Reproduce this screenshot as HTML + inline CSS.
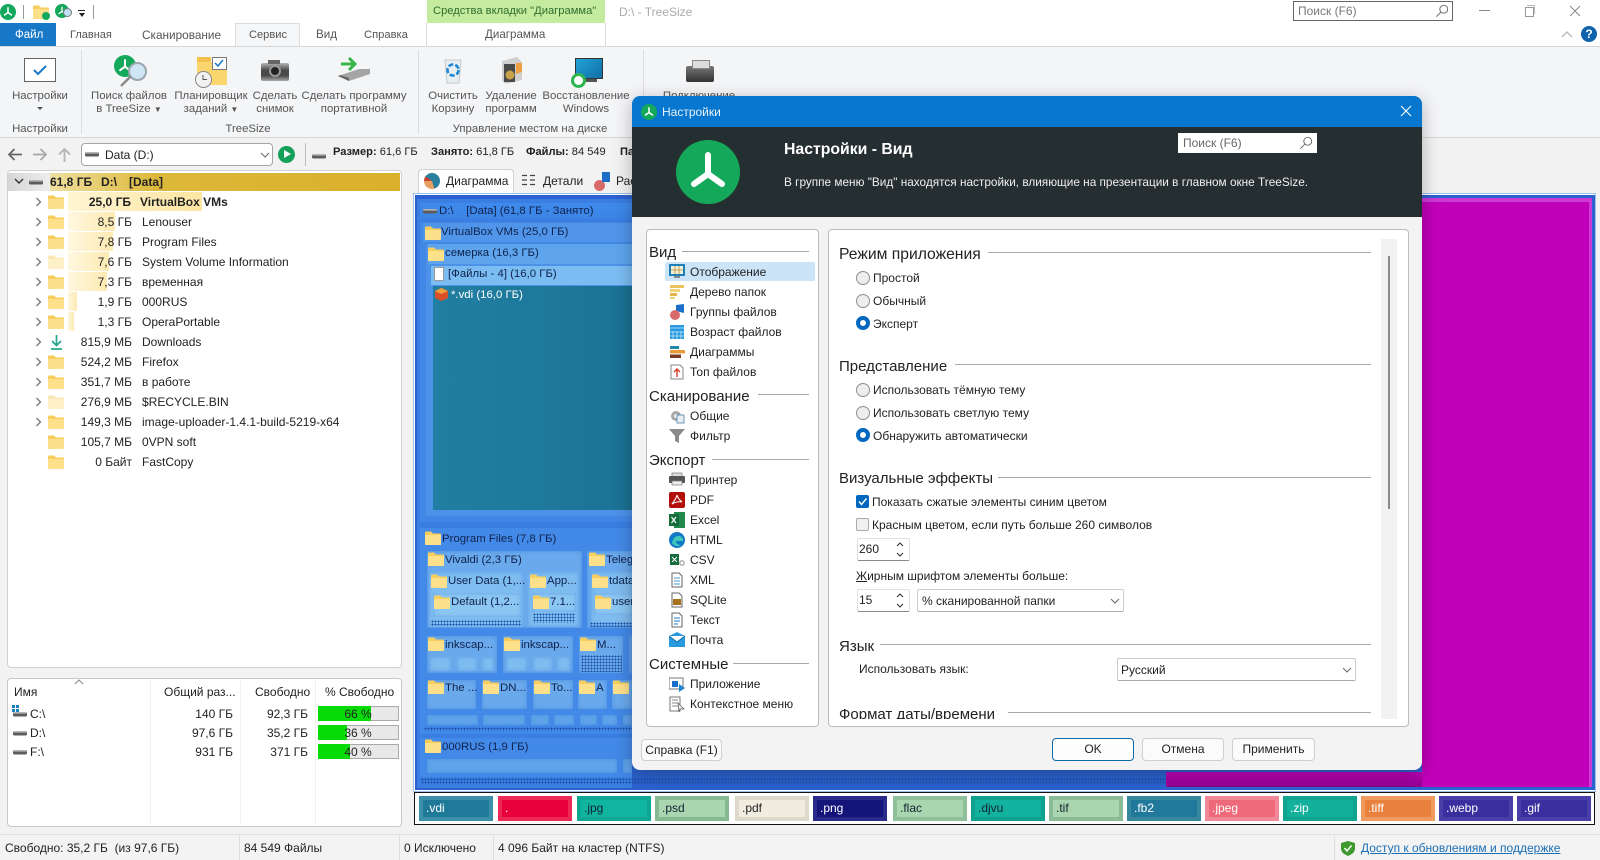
<!DOCTYPE html>
<html lang="ru"><head><meta charset="utf-8"><title>TreeSize</title>
<style>
html,body{margin:0;padding:0;background:#f3f3f3}
#p{position:relative;width:1600px;height:860px;overflow:hidden;background:#f2f2f2;font:12px/16px "Liberation Sans","Noto Sans CJK SC",sans-serif;color:#222}
#p div,#p span,#p svg{position:absolute}
#p b span,#p span span,#p .st{position:static}
.t{white-space:nowrap}
.c{white-space:nowrap;text-align:center;transform:translateX(-50%)}
.g{color:#555;font-size:11.4px}
.bd{background:#fff;border:1px solid #c4c4c4;box-sizing:border-box;border-radius:4px}
.sz{left:0;width:132px;text-align:right;white-space:nowrap}
.nm{left:142px;white-space:nowrap}
.bar{left:68px;height:19px;background:linear-gradient(90deg,#fff8e0,#fdeab2)}
.arr{left:35px;width:7px;height:10px}
.fo{left:48px;width:16px;height:14px}
.h{font-size:15px;line-height:18px;white-space:nowrap;color:#222}
.ln{height:1px;background:#a8a8a8}
.btn{background:#fbfbfb;border:1px solid #cfcfcf;box-sizing:border-box;border-radius:4px;text-align:center;line-height:21px}
.rd{left:856px;width:14px;height:14px;box-sizing:border-box;border:1px solid #8e8e8e;border-radius:50%;background:#eee}
.ro{left:856px;width:14px;height:14px;box-sizing:border-box;border:4px solid #0067c0;border-radius:50%;background:#fff}
.cb{background:#fff;border:1px solid #e0e0e0;border-bottom:1px solid #8a8a8a;box-sizing:border-box;border-radius:2px}
.ti{left:669px;width:16px;height:16px}
.ni{left:690px;white-space:nowrap}
.a{background:#6aa9ec;box-shadow:inset 0 0 4px #4f8fe0}
.l{background:#7fbcf0;box-shadow:inset 0 0 4px #5fa0e8}
.s{background:#5fa3ea;box-shadow:inset 0 0 3px #4b8ee0}
.d{background-image:radial-gradient(#1b4fa6 .9px,transparent 1px);background-size:3px 3px}
.ch{top:796px;width:74px;height:25px;box-sizing:border-box;border:4px solid;line-height:17px;padding-left:3px;white-space:nowrap}
.tt{color:#10234d;white-space:nowrap;font-size:11.4px}
</style></head><body>
<div id="p">
<svg width="0" height="0" style="left:0;top:0">
<defs>
<symbol id="logo" viewBox="0 0 64 64"><circle cx="32" cy="32" r="32" fill="#14a85a"/><path d="M32 15V34M18 44L32 34L46 44" fill="none" stroke="#fff" stroke-width="6" stroke-linecap="round" stroke-linejoin="round"/></symbol>
<symbol id="fold" viewBox="0 0 16 14"><path d="M0 1.5Q0 .5 1 .5H6L8 2.5H15Q16 2.5 16 3.5V13Q16 14 15 14H1Q0 14 0 13Z" fill="#f7cd5e"/><path d="M0 4H16V13Q16 14 15 14H1Q0 14 0 13Z" fill="#fde08a"/></symbol>
<symbol id="drv" viewBox="0 0 14 6"><rect x="0" y="1" width="14" height="4.5" rx="1.5" fill="#5c5c5c"/><rect x="0" y="1" width="14" height="1.6" rx=".8" fill="#b5b5b5"/></symbol>
<symbol id="chv" viewBox="0 0 7 10"><path d="M1.5 1L5.5 5L1.5 9" fill="none" stroke="#777" stroke-width="1.3"/></symbol>
<symbol id="dn" viewBox="0 0 10 6"><path d="M1 1L5 5L9 1" fill="none" stroke="#666" stroke-width="1"/></symbol>
<symbol id="lens" viewBox="0 0 16 16"><circle cx="10" cy="6" r="4.5" fill="none" stroke="#666" stroke-width="1.1"/><path d="M6.5 9.5L1.5 14.5" stroke="#666" stroke-width="1.1"/></symbol>
</defs></svg>

<!-- Title bar -->
<div style="left:0;top:0;width:1600px;height:46px;background:#fff"></div>
<svg style="left:0;top:4px" width="16" height="16"><use href="#logo"/></svg>
<div style="left:23px;top:5px;width:1px;height:14px;background:#999"></div>
<svg style="left:33px;top:5px" width="16" height="14"><use href="#fold"/></svg>
<div style="left:42px;top:12px;width:8px;height:8px;border-radius:50%;background:#14a85a"></div>
<svg style="left:55px;top:4px" width="14" height="14"><use href="#logo"/></svg>
<div style="left:63px;top:8px;width:7px;height:7px;border-radius:50%;background:#bfe0f5;border:1px solid #777"></div>
<div style="left:78px;top:10px;width:7px;height:1px;background:#222"></div>
<div style="left:79px;top:13px;width:0;height:0;border:3px solid transparent;border-top:4px solid #222"></div>
<div style="left:93px;top:5px;width:1px;height:14px;background:#999"></div>
<div style="left:427px;top:0;width:178px;height:23px;background:#c4eb9e"></div>
<div class="t" style="left:433px;top:3px;color:#2f6e2f;font-size:11.2px">Средства вкладки "Диаграмма"</div>
<div class="t" style="left:619px;top:4px;color:#aaa">D:\ - TreeSize</div>
<div style="left:1293px;top:1px;width:160px;height:20px;box-sizing:border-box;border:1px solid #666;background:#fff"></div>
<div class="t" style="left:1298px;top:3px;color:#777">Поиск (F6)</div>
<svg style="left:1435px;top:4px" width="14" height="14"><use href="#lens"/></svg>
<div style="left:1479px;top:10px;width:11px;height:1px;background:#888"></div>
<div style="left:1525px;top:7px;width:7px;height:8px;border:1px solid #999"></div>
<div style="left:1527px;top:5px;width:7px;height:8px;border:1px solid #bbb;border-left:0;border-bottom:0"></div>
<svg style="left:1569px;top:5px" width="12" height="12"><path d="M1 1L11 11M11 1L1 11" stroke="#888" stroke-width="1"/></svg>
<svg style="left:1561px;top:31px" width="12" height="7"><path d="M1 6L6 1L11 6" fill="none" stroke="#bbb" stroke-width="1.4"/></svg>
<div style="left:1581px;top:26px;width:16px;height:16px;border-radius:50%;background:#0f62ac;color:#fff;font-weight:bold;text-align:center;line-height:16px">?</div>

<!-- Tabs -->
<div style="left:0;top:23px;width:56px;height:23px;background:#1878c8"></div>
<div class="t" style="left:15px;top:27px;color:#fff;font-size:11.5px">Файл</div>
<div class="t g" style="left:70px;top:27px;font-size:11px">Главная</div>
<div class="t g" style="left:142px;top:27px;font-size:11.8px">Сканирование</div>
<div style="left:235px;top:23px;width:65px;height:24px;box-sizing:border-box;background:#f5f6f7;border:1px solid #dcdcdc;border-bottom:0"></div>
<div class="t g" style="left:249px;top:27px;font-size:11.1px">Сервис</div>
<div class="t g" style="left:316px;top:27px;font-size:11.6px">Вид</div>
<div class="t g" style="left:364px;top:27px;font-size:11.2px">Справка</div>
<div style="left:426px;top:23px;width:1px;height:23px;background:#ddd"></div>
<div style="left:605px;top:23px;width:1px;height:23px;background:#ddd"></div>
<div class="t g" style="left:485px;top:27px;font-size:11.6px">Диаграмма</div>

<!-- Ribbon -->
<div style="left:0;top:46px;width:1600px;height:92px;background:#f4f5f7;border-top:1px solid #d6d6d6;border-bottom:1px solid #d6d6d6;box-sizing:border-box"></div>
<div style="left:81px;top:50px;width:1px;height:84px;background:#ddd"></div>
<div style="left:418px;top:50px;width:1px;height:84px;background:#ddd"></div>
<div style="left:643px;top:50px;width:1px;height:84px;background:#ddd"></div>

<div style="left:24px;top:58px;width:32px;height:24px;box-sizing:border-box;background:#fff;border:1px solid #666"></div>
<svg style="left:32px;top:63px" width="16" height="14"><path d="M2 7L6 11L14 3" fill="none" stroke="#1877c9" stroke-width="2"/></svg>
<div class="c g" style="left:40px;top:88px">Настройки</div>
<div style="left:37px;top:107px;border:3px solid transparent;border-top:3px solid #555"></div>
<div class="c g" style="left:40px;top:121px">Настройки</div>

<svg style="left:114px;top:55px" width="22" height="22"><use href="#logo"/></svg>
<div style="left:128px;top:62px;width:19px;height:19px;box-sizing:border-box;border-radius:50%;background:#cfe6f5;border:2px solid #9aa5ad"></div>
<svg style="left:119px;top:75px" width="13" height="12"><path d="M12 1L2 11" stroke="#8a8a8a" stroke-width="2.4"/></svg>
<div class="c g" style="left:129px;top:88px">Поиск файлов</div>
<div class="c g" style="left:129px;top:101px">в TreeSize <span class="st" style="font-size:8px">▼</span></div>

<div style="left:197px;top:62px;width:30px;height:23px;background:#fbd56d"></div>
<div style="left:197px;top:57px;width:14px;height:5px;background:#f2c14e"></div>
<div style="left:212px;top:57px;width:15px;height:13px;box-sizing:border-box;background:#fff;border:1px solid #777"></div>
<svg style="left:214px;top:59px" width="10" height="9"><path d="M1 4L4 7L9 1" fill="none" stroke="#1877c9" stroke-width="1.5"/></svg>
<div style="left:195px;top:71px;width:17px;height:17px;box-sizing:border-box;border-radius:50%;background:#f2f2f2;border:1px solid #888"></div>
<svg style="left:198px;top:74px" width="10" height="10"><path d="M5 1V5.5H9" fill="none" stroke="#555"/></svg>
<div class="c g" style="left:211px;top:88px">Планировщик</div>
<div class="c g" style="left:211px;top:101px">заданий <span class="st" style="font-size:8px">▼</span></div>

<div style="left:261px;top:63px;width:28px;height:18px;background:linear-gradient(#b5b5b5,#4a4a4a 40%,#4a4a4a 70%,#aaa);border-radius:2px"></div>
<div style="left:268px;top:60px;width:12px;height:4px;background:#666"></div>
<div style="left:269px;top:65px;width:12px;height:12px;box-sizing:border-box;border-radius:50%;background:#222;border:2px solid #999"></div>
<div class="c g" style="left:275px;top:88px">Сделать</div>
<div class="c g" style="left:275px;top:101px">снимок</div>

<svg style="left:337px;top:56px" width="34" height="26"><path d="M1 20L22 13L33 13L33 18L12 25Z" fill="#a5a5a5"/><path d="M1 20L12 25L12 22L3 19Z" fill="#666"/><path d="M4 8H16M12 2L18 8L12 14" fill="none" stroke="#38b54a" stroke-width="3"/></svg>
<div class="c g" style="left:354px;top:88px">Сделать программу</div>
<div class="c g" style="left:354px;top:101px">портативной</div>
<div class="c g" style="left:248px;top:121px">TreeSize</div>

<svg style="left:443px;top:55px" width="20" height="29"><path d="M2 5H18L16 28H4Z" fill="#e8edf0" stroke="#c3c9cd"/><circle cx="10" cy="15" r="5.5" fill="none" stroke="#1c88d8" stroke-width="2.6" stroke-dasharray="5 2"/></svg>
<div class="c g" style="left:453px;top:88px">Очистить</div>
<div class="c g" style="left:453px;top:101px">Корзину</div>

<svg style="left:501px;top:56px" width="22" height="29"><path d="M1 5L16 1L21 6V24L5 28L1 25Z" fill="#d0d0d0"/><path d="M3 8H14V26H3Z" fill="#4a4a4a"/><circle cx="9" cy="19" r="4.5" fill="#c9a24a"/><path d="M15 7H21V16L15 18Z" fill="#f0a040"/></svg>
<div class="c g" style="left:511px;top:88px">Удаление</div>
<div class="c g" style="left:511px;top:101px">программ</div>

<div style="left:575px;top:58px;width:28px;height:21px;background:linear-gradient(135deg,#23a3d6,#0f6fa6);border:1px solid #333;box-sizing:border-box"></div>
<div style="left:583px;top:79px;width:14px;height:3px;background:#555"></div>
<div style="left:571px;top:73px;width:15px;height:15px;box-sizing:border-box;border-radius:50%;background:#fff;border:3px solid #2fb54f"></div>
<div class="c g" style="left:586px;top:88px">Восстановление</div>
<div class="c g" style="left:586px;top:101px">Windows</div>
<div class="c g" style="left:530px;top:121px">Управление местом на диске</div>

<div style="left:686px;top:66px;width:28px;height:16px;background:linear-gradient(#777,#333);border-radius:2px"></div>
<div style="left:692px;top:60px;width:16px;height:7px;background:#ddd;border:1px solid #888"></div>
<div class="c g" style="left:699px;top:88px">Подключение</div>

<!-- Toolbar -->
<svg style="left:8px;top:148px" width="15" height="13"><path d="M6.5 1L1 6.5L6.5 12M1 6.5H14" fill="none" stroke="#666" stroke-width="1.8"/></svg>
<svg style="left:32px;top:148px" width="15" height="13"><path d="M8.5 1L14 6.5L8.5 12M14 6.5H1" fill="none" stroke="#a8a8a8" stroke-width="1.8"/></svg>
<svg style="left:58px;top:148px" width="13" height="14"><path d="M1 6.5L6.5 1L12 6.5M6.5 1V14" fill="none" stroke="#b5b5b5" stroke-width="1.8"/></svg>
<div class="bd" style="left:81px;top:143px;width:192px;height:23px;border-color:#a5a5a5"></div>
<svg style="left:85px;top:151px" width="14" height="6"><use href="#drv"/></svg>
<div class="t" style="left:105px;top:147px">Data (D:)</div>
<svg style="left:260px;top:152px" width="10" height="6"><use href="#dn"/></svg>
<div style="left:278px;top:146px;width:17px;height:17px;border-radius:50%;background:#15a05a"></div>
<div style="left:284px;top:150px;border:4.5px solid transparent;border-left:7px solid #fff;border-right:0"></div>
<div style="left:305px;top:143px;width:1px;height:23px;background:#bbb"></div>
<svg style="left:312px;top:153px" width="14" height="6"><use href="#drv"/></svg>
<div class="t" style="left:333px;top:144px;font-size:11.1px"><b>Размер:</b> 61,6 ГБ</div>
<div class="t" style="left:431px;top:144px;font-size:11.1px"><b>Занято:</b> 61,8 ГБ</div>
<div class="t" style="left:526px;top:144px;font-size:11.1px"><b>Файлы:</b> 84 549</div>
<div class="t" style="left:620px;top:144px;font-size:11.1px"><b>Па</b></div>

<!-- Tree panel -->
<div class="bd" style="left:7px;top:170px;width:395px;height:498px;border-color:#d0d0d0"></div>
<div style="left:8px;top:173px;width:42px;height:18px;background:linear-gradient(90deg,#d6d6d6,#ededed)"></div>
<div style="left:50px;top:173px;width:350px;height:18px;background:linear-gradient(90deg,#efe0a0,#dcb83a 30%,#d9b02a)"></div>
<svg style="left:14px;top:178px" width="10" height="6"><path d="M1 1L5 5L9 1" fill="none" stroke="#333" stroke-width="1.4"/></svg>
<svg style="left:29px;top:179px" width="14" height="6"><use href="#drv"/></svg>
<div class="t" style="left:50px;top:174px;font-weight:bold">61,8 ГБ</div>
<div class="t" style="left:101px;top:174px;font-weight:bold">D:\</div>
<div class="t" style="left:129px;top:174px;font-weight:bold">[Data]</div>

<div class="bar" style="top:192px;width:134px;background:linear-gradient(90deg,#fff5d2,#fde5a2)"></div>
<div class="bar" style="top:212px;width:47px"></div>
<div class="bar" style="top:232px;width:45px"></div>
<div class="bar" style="top:252px;width:41px"></div>
<div class="bar" style="top:272px;width:39px"></div>
<div class="bar" style="top:292px;width:9px"></div>
<div class="bar" style="top:312px;width:6px"></div>

<svg class="arr" style="top:197px"><use href="#chv"/></svg><svg class="fo" style="top:195px"><use href="#fold"/></svg>
<div class="sz" style="top:194px;font-weight:bold;width:131px">25,0 ГБ</div><div class="nm" style="top:194px;left:140px;font-weight:bold">VirtualBox VMs</div>
<svg class="arr" style="top:217px"><use href="#chv"/></svg><svg class="fo" style="top:215px"><use href="#fold"/></svg>
<div class="sz" style="top:214px">8,5 ГБ</div><div class="nm" style="top:214px">Lenouser</div>
<svg class="arr" style="top:237px"><use href="#chv"/></svg><svg class="fo" style="top:235px"><use href="#fold"/></svg>
<div class="sz" style="top:234px">7,8 ГБ</div><div class="nm" style="top:234px">Program Files</div>
<svg class="arr" style="top:257px"><use href="#chv"/></svg><svg class="fo" style="top:255px;opacity:.45"><use href="#fold"/></svg>
<div class="sz" style="top:254px">7,6 ГБ</div><div class="nm" style="top:254px">System Volume Information</div>
<svg class="arr" style="top:277px"><use href="#chv"/></svg><svg class="fo" style="top:275px"><use href="#fold"/></svg>
<div class="sz" style="top:274px">7,3 ГБ</div><div class="nm" style="top:274px">временная</div>
<svg class="arr" style="top:297px"><use href="#chv"/></svg><svg class="fo" style="top:295px"><use href="#fold"/></svg>
<div class="sz" style="top:294px">1,9 ГБ</div><div class="nm" style="top:294px">000RUS</div>
<svg class="arr" style="top:317px"><use href="#chv"/></svg><svg class="fo" style="top:315px"><use href="#fold"/></svg>
<div class="sz" style="top:314px">1,3 ГБ</div><div class="nm" style="top:314px">OperaPortable</div>
<svg class="arr" style="top:337px"><use href="#chv"/></svg><svg style="left:50px;top:334px" width="13" height="16"><path d="M6.5 1V11M2 7L6.5 11.5L11 7M1 15H12" fill="none" stroke="#22a88e" stroke-width="1.7"/></svg>
<div class="sz" style="top:334px">815,9 МБ</div><div class="nm" style="top:334px">Downloads</div>
<svg class="arr" style="top:357px"><use href="#chv"/></svg><svg class="fo" style="top:355px"><use href="#fold"/></svg>
<div class="sz" style="top:354px">524,2 МБ</div><div class="nm" style="top:354px">Firefox</div>
<svg class="arr" style="top:377px"><use href="#chv"/></svg><svg class="fo" style="top:375px"><use href="#fold"/></svg>
<div class="sz" style="top:374px">351,7 МБ</div><div class="nm" style="top:374px">в работе</div>
<svg class="arr" style="top:397px"><use href="#chv"/></svg><svg class="fo" style="top:395px;opacity:.45"><use href="#fold"/></svg>
<div class="sz" style="top:394px">276,9 МБ</div><div class="nm" style="top:394px">$RECYCLE.BIN</div>
<svg class="arr" style="top:417px"><use href="#chv"/></svg><svg class="fo" style="top:415px"><use href="#fold"/></svg>
<div class="sz" style="top:414px">149,3 МБ</div><div class="nm" style="top:414px">image-uploader-1.4.1-build-5219-x64</div>
<svg class="fo" style="top:435px"><use href="#fold"/></svg>
<div class="sz" style="top:434px">105,7 МБ</div><div class="nm" style="top:434px">0VPN soft</div>
<svg class="fo" style="top:455px"><use href="#fold"/></svg>
<div class="sz" style="top:454px">0 Байт</div><div class="nm" style="top:454px">FastCopy</div>

<!-- Drives panel -->
<div class="bd" style="left:7px;top:678px;width:395px;height:149px;border-color:#c8c8c8"></div>
<div style="left:150px;top:680px;width:1px;height:145px;background:#f0f0f0"></div>
<div style="left:240px;top:680px;width:1px;height:145px;background:#f0f0f0"></div>
<div style="left:315px;top:680px;width:1px;height:145px;background:#f0f0f0"></div>
<svg style="left:74px;top:679px" width="10" height="6"><path d="M1 5L5 1L9 5" fill="none" stroke="#888"/></svg>
<div class="t" style="left:14px;top:684px">Имя</div>
<div class="t" style="left:164px;top:684px">Общий раз...</div>
<div class="t" style="left:255px;top:684px">Свободно</div>
<div class="t" style="left:325px;top:684px">% Свободно</div>

<div style="left:12px;top:705px;width:3px;height:3px;background:#1c7fc4;box-shadow:4px 0 #1c7fc4,0 4px #1c7fc4,4px 4px #1c7fc4"></div>
<svg style="left:13px;top:711px" width="14" height="6"><use href="#drv"/></svg>
<svg style="left:13px;top:730px" width="14" height="6"><use href="#drv"/></svg>
<svg style="left:13px;top:749px" width="14" height="6"><use href="#drv"/></svg>
<div class="t" style="left:30px;top:706px">C:\</div><div class="t" style="left:30px;top:725px">D:\</div><div class="t" style="left:30px;top:744px">F:\</div>
<div class="sz" style="top:706px;width:233px">140 ГБ</div><div class="sz" style="top:706px;width:308px">92,3 ГБ</div>
<div class="sz" style="top:725px;width:233px">97,6 ГБ</div><div class="sz" style="top:725px;width:308px">35,2 ГБ</div>
<div class="sz" style="top:744px;width:233px">931 ГБ</div><div class="sz" style="top:744px;width:308px">371 ГБ</div>
<div style="left:318px;top:706px;width:81px;height:15px;background:#e8e8e8;border:1px solid #aaa;box-sizing:border-box"></div><div style="left:318px;top:706px;width:53px;height:15px;background:#08dc08"></div>
<div style="left:318px;top:725px;width:81px;height:15px;background:#e8e8e8;border:1px solid #aaa;box-sizing:border-box"></div><div style="left:318px;top:725px;width:29px;height:15px;background:#08dc08"></div>
<div style="left:318px;top:744px;width:81px;height:15px;background:#e8e8e8;border:1px solid #aaa;box-sizing:border-box"></div><div style="left:318px;top:744px;width:32px;height:15px;background:#08dc08"></div>
<div class="c" style="left:358px;top:706px">66 %</div><div class="c" style="left:358px;top:725px">36 %</div><div class="c" style="left:358px;top:744px">40 %</div>

<!-- Status bar -->
<div style="left:0;top:834px;width:1600px;height:26px;background:#f3f3f3;border-top:1px solid #e2e2e2;box-sizing:border-box"></div>
<div style="left:239px;top:836px;width:1px;height:24px;background:#ddd"></div>
<div style="left:399px;top:836px;width:1px;height:24px;background:#ddd"></div>
<div style="left:493px;top:836px;width:1px;height:24px;background:#ddd"></div>
<div style="left:1334px;top:836px;width:1px;height:24px;background:#ddd"></div>
<div class="t" style="left:5px;top:840px">Свободно: 35,2 ГБ&nbsp; (из 97,6 ГБ)</div>
<div class="t" style="left:244px;top:840px">84 549 Файлы</div>
<div class="t" style="left:404px;top:840px">0 Исключено</div>
<div class="t" style="left:498px;top:840px">4 096 Байт на кластер (NTFS)</div>
<svg style="left:1341px;top:841px" width="14" height="15"><path d="M7 0L14 2V8Q14 12 7 15Q0 12 0 8V2Z" fill="#3f9a2e"/><path d="M3.5 7L6 10L10.5 4.5" fill="none" stroke="#fff" stroke-width="1.5"/></svg>
<div class="t" style="left:1361px;top:840px;color:#1b6fb5;text-decoration:underline">Доступ к обновлениям и поддержке</div>

<!-- Chart tabs -->
<div style="left:418px;top:169px;width:96px;height:26px;box-sizing:border-box;background:#fff;border:1px solid #d0d0d0;border-bottom:0;border-radius:4px 4px 0 0"></div>
<div style="left:424px;top:173px;width:16px;height:16px;border-radius:50%;background:conic-gradient(#2a7f9f 0 45%,#e8a060 45% 75%,#c93f2f 75% 85%,#2a7f9f 85%)"></div>
<div class="t" style="left:446px;top:173px">Диаграмма</div>
<svg style="left:522px;top:174px" width="14" height="13"><path d="M0 1.5H5M0 6H5M0 10.5H5M8 1.5H13M8 6H13M8 10.5H13" stroke="#444" stroke-width="1.2"/></svg>
<div class="t" style="left:543px;top:173px">Детали</div>
<div style="left:594px;top:180px;width:11px;height:11px;border-radius:50%;background:#d86a6a"></div>
<div style="left:602px;top:172px;width:8px;height:10px;background:#1c6fc8"></div>
<div class="t" style="left:616px;top:173px">Рас</div>

<!-- Treemap -->
<div style="left:413px;top:193px;width:1183px;height:599px;background:#fff;box-shadow:0 0 0 1px #9fc2ea inset"></div>
<div style="left:415px;top:195px;width:1180px;height:595px;background:#2c62cf"></div>
<div style="left:1166px;top:772px;width:424px;height:15px;background:linear-gradient(#c000b8,#8f0090)"></div>
<div style="left:1422px;top:198px;width:170px;height:589px;box-sizing:border-box;background:#c000b8;border:1px solid #cc3ad6;border-width:4px 3px 0 0"></div>
<div style="left:417px;top:199px;width:215px;height:589px;background:#3a7ee2"></div>
<div style="left:420px;top:203px;width:212px;height:16px;background:linear-gradient(#3f8aec,#3b84e6)"></div>
<svg style="left:423px;top:208px" width="14" height="6"><use href="#drv"/></svg>
<div class="tt" style="left:439px;top:203px">D:\ &nbsp;&nbsp; [Data] (61,8 ГБ - Занято)</div>
<div style="left:420px;top:222px;width:212px;height:300px;background:#4287e6"></div>
<div style="left:423px;top:223px;width:209px;height:19px;background:#5095ea"></div>
<svg style="left:425px;top:226px" width="16" height="14"><use href="#fold"/></svg>
<div class="tt" style="left:441px;top:224px">VirtualBox VMs (25,0 ГБ)</div>
<div style="left:426px;top:244px;width:206px;height:272px;background:#4d91e8"></div>
<div style="left:428px;top:244px;width:204px;height:20px;background:#5ea5ee"></div>
<svg style="left:428px;top:247px" width="16" height="14"><use href="#fold"/></svg>
<div class="tt" style="left:445px;top:245px">семерка (16,3 ГБ)</div>
<div style="left:430px;top:265px;width:202px;height:245px;background:#4a93e6"></div>
<div style="left:431px;top:266px;width:201px;height:19px;background:#7bbdf3"></div>
<div style="left:434px;top:267px;width:10px;height:14px;background:#fff;border:1px solid #999;box-sizing:border-box"></div>
<div class="tt" style="left:448px;top:266px">[Файлы - 4] (16,0 ГБ)</div>
<div style="left:433px;top:286px;width:199px;height:224px;background:linear-gradient(90deg,#217ea2,#1e7a9c 50%,#1b7193)"></div>
<svg style="left:434px;top:287px" width="15" height="15"><path d="M7.5 1L14 4V11L7.5 14L1 11V4Z" fill="#d8512a"/><path d="M7.5 7L14 4L7.5 1L1 4Z" fill="#f0a03a"/></svg>
<div class="t" style="left:451px;top:287px;color:#fff;font-size:11.4px">*.vdi (16,0 ГБ)</div>

<div style="left:420px;top:528px;width:212px;height:206px;background:#4389e8"></div>
<svg style="left:425px;top:531px" width="16" height="14"><use href="#fold"/></svg>
<div class="tt" style="left:442px;top:531px">Program Files (7,8 ГБ)</div>
<div class="a" style="left:427px;top:551px;width:155px;height:77px"></div>
<svg style="left:428px;top:552px" width="16" height="14"><use href="#fold"/></svg><div class="tt" style="left:445px;top:552px">Vivaldi (2,3 ГБ)</div>
<div class="l" style="left:429px;top:572px;width:94px;height:55px"></div>
<svg style="left:431px;top:574px" width="16" height="14"><use href="#fold"/></svg><div class="tt" style="left:448px;top:573px">User Data (1,...</div>
<div class="l" style="left:433px;top:593px;width:88px;height:24px;background:#8cc6f2"></div>
<svg style="left:434px;top:595px" width="16" height="14"><use href="#fold"/></svg><div class="tt" style="left:451px;top:594px">Default (1,2...</div>
<div class="d" style="left:431px;top:620px;width:90px;height:6px"></div>
<div class="l" style="left:528px;top:572px;width:51px;height:55px"></div>
<svg style="left:530px;top:574px" width="16" height="14"><use href="#fold"/></svg><div class="tt" style="left:547px;top:573px">App...</div>
<div class="l" style="left:532px;top:593px;width:44px;height:19px;background:#8cc6f2"></div>
<svg style="left:533px;top:595px" width="16" height="14"><use href="#fold"/></svg><div class="tt" style="left:550px;top:594px">7.1...</div>
<div class="d" style="left:533px;top:613px;width:42px;height:10px"></div>
<div class="a" style="left:587px;top:551px;width:45px;height:77px"></div>
<svg style="left:589px;top:552px" width="16" height="14"><use href="#fold"/></svg><div class="tt" style="left:606px;top:552px;width:26px;overflow:hidden">Teleg</div>
<div class="l" style="left:591px;top:572px;width:41px;height:53px"></div>
<svg style="left:592px;top:574px" width="16" height="14"><use href="#fold"/></svg><div class="tt" style="left:609px;top:573px;width:23px;overflow:hidden">tdata</div>
<div class="l" style="left:594px;top:593px;width:38px;height:22px;background:#8cc6f2"></div>
<svg style="left:595px;top:595px" width="16" height="14"><use href="#fold"/></svg><div class="tt" style="left:612px;top:594px;width:20px;overflow:hidden">user</div>
<div class="d" style="left:590px;top:622px;width:42px;height:5px"></div>

<div class="a" style="left:427px;top:636px;width:70px;height:37px"></div>
<svg style="left:428px;top:637px" width="16" height="14"><use href="#fold"/></svg><div class="tt" style="left:445px;top:637px">inkscap...</div>
<div class="l" style="left:430px;top:657px;width:21px;height:14px"></div><div class="l" style="left:457px;top:657px;width:20px;height:14px"></div><div class="l" style="left:482px;top:657px;width:12px;height:14px"></div>
<div class="a" style="left:503px;top:636px;width:70px;height:37px"></div>
<svg style="left:504px;top:637px" width="16" height="14"><use href="#fold"/></svg><div class="tt" style="left:521px;top:637px">inkscap...</div>
<div class="l" style="left:506px;top:657px;width:21px;height:14px"></div><div class="l" style="left:533px;top:657px;width:19px;height:14px"></div><div class="l" style="left:557px;top:657px;width:13px;height:14px"></div>
<div class="a" style="left:579px;top:636px;width:44px;height:37px"></div>
<svg style="left:580px;top:637px" width="16" height="14"><use href="#fold"/></svg><div class="tt" style="left:597px;top:637px">M...</div>
<div class="d" style="left:581px;top:655px;width:41px;height:17px"></div>
<div class="a" style="left:629px;top:636px;width:3px;height:37px"></div>

<div class="a" style="left:427px;top:680px;width:49px;height:29px"></div><svg style="left:428px;top:680px" width="16" height="14"><use href="#fold"/></svg><div class="tt" style="left:445px;top:680px">The ...</div>
<div class="a" style="left:482px;top:680px;width:45px;height:29px"></div><svg style="left:483px;top:680px" width="16" height="14"><use href="#fold"/></svg><div class="tt" style="left:500px;top:680px">DN...</div>
<div class="a" style="left:533px;top:680px;width:40px;height:29px"></div><svg style="left:534px;top:680px" width="16" height="14"><use href="#fold"/></svg><div class="tt" style="left:551px;top:680px">To...</div>
<div class="a" style="left:578px;top:680px;width:29px;height:29px"></div><svg style="left:579px;top:680px" width="16" height="14"><use href="#fold"/></svg><div class="tt" style="left:596px;top:680px">A</div>
<div class="a" style="left:612px;top:680px;width:20px;height:29px"></div><svg style="left:613px;top:680px" width="16" height="14"><use href="#fold"/></svg>
<div class="s" style="left:427px;top:715px;width:51px;height:10px"></div><div class="s" style="left:483px;top:715px;width:42px;height:10px"></div><div class="s" style="left:531px;top:715px;width:18px;height:10px"></div><div class="s" style="left:554px;top:715px;width:20px;height:10px"></div><div class="s" style="left:580px;top:715px;width:17px;height:10px"></div><div class="s" style="left:602px;top:715px;width:15px;height:10px"></div><div class="s" style="left:623px;top:715px;width:9px;height:10px"></div>
<div class="d" style="left:424px;top:727px;width:208px;height:4px"></div>

<div style="left:420px;top:738px;width:212px;height:39px;background:#4389e8"></div>
<svg style="left:425px;top:739px" width="16" height="14"><use href="#fold"/></svg>
<div class="tt" style="left:442px;top:739px">000RUS (1,9 ГБ)</div>
<div class="s" style="left:427px;top:759px;width:190px;height:14px"></div>
<div class="s" style="left:623px;top:759px;width:9px;height:14px"></div>
<div class="d" style="left:421px;top:778px;width:745px;height:6px"></div>

<!-- Legend -->
<div style="left:414px;top:792px;width:1181px;height:33px;box-sizing:border-box;background:#fff;border:1px solid #111"></div>
<div class="ch" style="left:419px;background:#1f7a9a;border-color:#3d8fa9;color:#fff">.vdi</div>
<div class="ch" style="left:498px;background:#e8003c;border-color:#ed2a55;color:#fff">.</div>
<div class="ch" style="left:577px;background:#10b5a0;border-color:#0fa794;color:#123">.jpg</div>
<div class="ch" style="left:655px;background:#a9d6ae;border-color:#86b892;color:#123">.psd</div>
<div class="ch" style="left:735px;background:#f1ece0;border-color:#ddd8cc;color:#222">.pdf</div>
<div class="ch" style="left:813px;background:#14147a;border-color:#2a2a8a;color:#fff">.png</div>
<div class="ch" style="left:893px;background:#a9d6ae;border-color:#8fc09a;color:#123">.flac</div>
<div class="ch" style="left:971px;background:#12b29e;border-color:#0fa08e;color:#123">.djvu</div>
<div class="ch" style="left:1049px;background:#a9d6ae;border-color:#8abb96;color:#123">.tif</div>
<div class="ch" style="left:1127px;background:#20789a;border-color:#37889f;color:#fff">.fb2</div>
<div class="ch" style="left:1205px;background:#ee6a7a;border-color:#f08898;color:#fff">.jpeg</div>
<div class="ch" style="left:1283px;background:#13b19c;border-color:#12a490;color:#fff">.zip</div>
<div class="ch" style="left:1361px;background:#e8803e;border-color:#f09a60;color:#fff">.tiff</div>
<div class="ch" style="left:1439px;background:#3a2f9f;border-color:#4a3fa8;color:#fff">.webp</div>
<div class="ch" style="left:1517px;background:#3a2f9f;border-color:#4a3fa8;color:#fff">.gif</div>

<!-- Dialog -->
<div style="left:632px;top:96px;width:790px;height:674px;background:#f3f3f3;border-radius:8px;box-shadow:0 4px 18px rgba(0,0,0,.28);overflow:hidden">
<div style="left:0;top:0;width:790px;height:31px;background:#0676ce"></div>
<div style="left:0;top:31px;width:790px;height:90px;background:#252e30"></div>
</div>
<svg style="left:641px;top:104px" width="16" height="16"><use href="#logo"/></svg>
<div class="t" style="left:662px;top:104px;color:#e8f2fb">Настройки</div>
<svg style="left:1400px;top:105px" width="12" height="12"><path d="M1 1L11 11M11 1L1 11" stroke="#fff" stroke-width="1.1"/></svg>
<svg style="left:676px;top:140px" width="64" height="64"><use href="#logo"/></svg>
<div class="t" style="left:784px;top:141px;color:#fff;font-weight:bold;font-size:15.8px;line-height:18px">Настройки - Вид</div>
<div class="t" style="left:784px;top:174px;color:#f0f0f0;font-size:11.8px">В группе меню "Вид" находятся настройки, влияющие на презентации в главном окне TreeSize.</div>
<div style="left:1178px;top:133px;width:139px;height:20px;background:#fff"></div>
<div class="t" style="left:1183px;top:135px;color:#666">Поиск (F6)</div>
<svg style="left:1299px;top:136px" width="14" height="14"><use href="#lens"/></svg>

<!-- Left nav -->
<div class="bd" style="left:646px;top:229px;width:173px;height:498px;border-color:#bcbcbc"></div>
<div class="h" style="left:649px;top:244px">Вид</div><div class="ln" style="left:682px;top:251px;width:127px"></div>
<div style="left:665px;top:262px;width:150px;height:19px;background:#cce4f7;border-radius:2px"></div>
<svg class="ti" style="top:264px"><rect x="0" y="0" width="16" height="12" fill="#1f7fb8"/><rect x="2" y="2" width="12" height="8" fill="#f0f0e0"/><path d="M6 2V10M10 2V10M2 6H14" stroke="#c8a040"/><rect x="5" y="12" width="6" height="2" fill="#888"/></svg>
<div class="ni" style="top:264px">Отображение</div>
<svg class="ti" style="top:284px"><path d="M1 1H15V4H1Z" fill="#e8c25a"/><path d="M1 5H11V8H1Z" fill="#f0d27a"/><path d="M1 9H8V12H1Z" fill="#e0b84a"/><path d="M1 13H6V15H1Z" fill="#f0d27a"/></svg>
<div class="ni" style="top:284px">Дерево папок</div>
<svg class="ti" style="top:304px"><path d="M7 1L15 0V9L7 7Z" fill="#1c6fc8"/><circle cx="6" cy="11" r="5" fill="#d86a6a"/></svg>
<div class="ni" style="top:304px">Группы файлов</div>
<svg class="ti" style="top:324px"><rect x="1" y="1" width="14" height="14" fill="#2a9ae0"/><path d="M1 4H15M4 7V15M8 7V15M12 7V15M1 8H15M1 12H15" stroke="#bfe3f7" stroke-width=".8"/></svg>
<div class="ni" style="top:324px">Возраст файлов</div>
<svg class="ti" style="top:344px"><rect x="1" y="2" width="9" height="3" fill="#1f8aa8"/><rect x="1" y="6" width="15" height="3.4" fill="#e89a3a"/><rect x="1" y="10.5" width="11" height="3.5" fill="#7a3a2a"/></svg>
<div class="ni" style="top:344px">Диаграммы</div>
<svg class="ti" style="top:364px"><path d="M2 1H11L14 4V15H2Z" fill="#fff" stroke="#888"/><path d="M8 13V5M5 8L8 5L11 8" fill="none" stroke="#d8402a" stroke-width="1.4"/></svg>
<div class="ni" style="top:364px">Топ файлов</div>
<div class="h" style="left:649px;top:388px">Сканирование</div><div class="ln" style="left:758px;top:394px;width:51px"></div>
<svg class="ti" style="top:408px"><circle cx="7" cy="8" r="5" fill="#a8a8a8"/><circle cx="7" cy="8" r="2" fill="#eee"/><rect x="8" y="7" width="7" height="8" fill="#e8eef2" stroke="#4a7fa8" stroke-width=".8"/></svg>
<div class="ni" style="top:408px">Общие</div>
<svg class="ti" style="top:428px"><path d="M0 1H16L10 8V15L6 13V8Z" fill="#8a8a8a"/></svg>
<div class="ni" style="top:428px">Фильтр</div>
<div class="h" style="left:649px;top:452px">Экспорт</div><div class="ln" style="left:712px;top:459px;width:97px"></div>
<svg class="ti" style="top:472px"><rect x="3" y="1" width="10" height="4" fill="#ddd" stroke="#777" stroke-width=".7"/><rect x="0" y="4" width="16" height="7" rx="1" fill="#555"/><rect x="3" y="9" width="10" height="4" fill="#eee" stroke="#777" stroke-width=".7"/></svg>
<div class="ni" style="top:472px">Принтер</div>
<svg class="ti" style="top:492px"><rect x="0" y="0" width="16" height="16" rx="2" fill="#b3100c"/><path d="M3 12Q7 7 8 3Q9 7 13 10Q8 9 3 12Z" fill="none" stroke="#fff" stroke-width="1.1"/></svg>
<div class="ni" style="top:492px">PDF</div>
<svg class="ti" style="top:512px"><rect x="5" y="0" width="11" height="16" fill="#1f8a4c"/><rect x="0" y="2" width="10" height="12" fill="#146c3a"/><path d="M2.5 5L7 11M7 5L2.5 11" stroke="#fff" stroke-width="1.2"/></svg>
<div class="ni" style="top:512px">Excel</div>
<svg class="ti" style="top:532px"><circle cx="8" cy="8" r="8" fill="#1278c8"/><path d="M3 11Q5 3 11 4Q15 6 14 9H7Q7 13 12 13Q7 16 3 11Z" fill="#3fc8b8"/></svg>
<div class="ni" style="top:532px">HTML</div>
<svg class="ti" style="top:552px"><rect x="1" y="2" width="9" height="11" fill="#146c3a"/><path d="M3 5L8 10M8 5L3 10" stroke="#fff" stroke-width="1"/><circle cx="13" cy="11" r="2.2" fill="none" stroke="#888"/></svg>
<div class="ni" style="top:552px">CSV</div>
<svg class="ti" style="top:572px"><path d="M3 1H10L13 4V15H3Z" fill="#fff" stroke="#666"/><path d="M5 6H11M5 9H11M5 12H11" stroke="#4a9ac8"/></svg>
<div class="ni" style="top:572px">XML</div>
<svg class="ti" style="top:592px"><path d="M3 1H10L13 4V15H3Z" fill="#fff" stroke="#666"/><rect x="4" y="7" width="8" height="6" fill="#a8701a"/></svg>
<div class="ni" style="top:592px">SQLite</div>
<svg class="ti" style="top:612px"><path d="M3 1H10L13 4V15H3Z" fill="#fff" stroke="#666"/><path d="M5 6H11M5 9H11M5 12H9" stroke="#1c78c8"/></svg>
<div class="ni" style="top:612px">Текст</div>
<svg class="ti" style="top:632px"><path d="M0 4L8 0L16 4V15H0Z" fill="#2a9ae0"/><path d="M0 4L8 10L16 4" fill="#fff" stroke="#0f6aa8"/></svg>
<div class="ni" style="top:632px">Почта</div>
<div class="h" style="left:649px;top:656px">Системные</div><div class="ln" style="left:733px;top:663px;width:76px"></div>
<svg class="ti" style="top:676px"><rect x="0" y="2" width="14" height="11" fill="#fff" stroke="#777"/><rect x="3" y="5" width="6" height="6" fill="#1c6fc8"/><path d="M10 8L16 12L10 16Z" fill="#1c88c8"/></svg>
<div class="ni" style="top:676px">Приложение</div>
<svg class="ti" style="top:696px"><rect x="1" y="1" width="10" height="14" fill="#fff" stroke="#777"/><path d="M3 4H9M3 7H9M3 10H9" stroke="#888"/><path d="M9 7L15 13H11L10 16Z" fill="#eee" stroke="#555" stroke-width=".7"/></svg>
<div class="ni" style="top:696px">Контекстное меню</div>
<div class="btn" style="left:641px;top:739px;width:81px;height:22px">Справка (F1)</div>

<!-- Right panel -->
<div class="bd" style="left:828px;top:229px;width:581px;height:498px;border-color:#bcbcbc"></div>
<div style="left:1381px;top:239px;width:16px;height:480px;background:#f2f2f2"></div>
<div style="left:1388px;top:256px;width:2px;height:253px;background:#8a8a8a"></div>

<div class="h" style="left:839px;top:246px;font-size:15.7px">Режим приложения</div><div class="ln" style="left:988px;top:252px;width:383px"></div>
<div class="rd" style="top:271px"></div><div class="t" style="left:873px;top:270px">Простой</div>
<div class="rd" style="top:294px"></div><div class="t" style="left:873px;top:293px">Обычный</div>
<div class="ro" style="top:316px"></div><div class="t" style="left:873px;top:316px">Эксперт</div>

<div class="h" style="left:839px;top:358px">Представление</div><div class="ln" style="left:955px;top:364px;width:416px"></div>
<div class="rd" style="top:383px"></div><div class="t" style="left:873px;top:382px">Использовать тёмную тему</div>
<div class="rd" style="top:406px"></div><div class="t" style="left:873px;top:405px">Использовать светлую тему</div>
<div class="ro" style="top:428px"></div><div class="t" style="left:873px;top:428px">Обнаружить автоматически</div>

<div class="h" style="left:839px;top:470px">Визуальные эффекты</div><div class="ln" style="left:998px;top:477px;width:373px"></div>
<div style="left:856px;top:495px;width:13px;height:13px;background:#0067c0;border-radius:2px"></div>
<svg style="left:857px;top:496px" width="11" height="11"><path d="M2 5.5L4.5 8.5L9.5 2.5" fill="none" stroke="#fff" stroke-width="1.4"/></svg>
<div class="t" style="left:872px;top:494px">Показать сжатые элементы синим цветом</div>
<div style="left:856px;top:518px;width:13px;height:13px;box-sizing:border-box;background:#f0f0f0;border:1px solid #aaa;border-radius:2px"></div>
<div class="t" style="left:872px;top:517px">Красным цветом, если путь больше 260 символов</div>
<div class="cb" style="left:857px;top:538px;width:53px;height:23px"></div>
<div class="t" style="left:859px;top:541px">260</div>
<svg style="left:895px;top:541px" width="10" height="17"><path d="M2 5L5 2L8 5M2 12L5 15L8 12" fill="none" stroke="#333" stroke-width="1.1"/></svg>
<div class="t" style="left:856px;top:568px"><span class="st" style="text-decoration:underline">Ж</span>ирным шрифтом элементы больше:</div>
<div class="cb" style="left:857px;top:589px;width:53px;height:23px"></div>
<div class="t" style="left:859px;top:592px">15</div>
<svg style="left:895px;top:592px" width="10" height="17"><path d="M2 5L5 2L8 5M2 12L5 15L8 12" fill="none" stroke="#333" stroke-width="1.1"/></svg>
<div class="cb" style="left:917px;top:589px;width:207px;height:23px;border-color:#ccc #ccc #aaa"></div>
<div class="t" style="left:922px;top:593px">% сканированной папки</div>
<svg style="left:1110px;top:598px" width="10" height="6"><use href="#dn"/></svg>

<div class="h" style="left:839px;top:638px">Язык</div><div class="ln" style="left:880px;top:644px;width:491px"></div>
<div class="t" style="left:859px;top:661px">Использовать язык:</div>
<div class="cb" style="left:1117px;top:658px;width:239px;height:23px;border-color:#ccc #ccc #aaa"></div>
<div class="t" style="left:1121px;top:662px">Русский</div>
<svg style="left:1342px;top:667px" width="10" height="6"><use href="#dn"/></svg>

<div style="left:830px;top:700px;width:540px;height:19px;overflow:hidden"><div class="h" style="left:9px;top:6px">Формат даты/времени</div></div>
<div class="ln" style="left:1008px;top:712px;width:363px"></div>

<!-- Buttons -->
<div class="btn" style="left:1052px;top:738px;width:82px;height:23px;border:1.5px solid #0f6ba8;background:#fdfdfd">OK</div>
<div class="btn" style="left:1142px;top:738px;width:82px;height:23px">Отмена</div>
<div class="btn" style="left:1232px;top:738px;width:83px;height:23px">Применить</div>
</div>
</body></html>
